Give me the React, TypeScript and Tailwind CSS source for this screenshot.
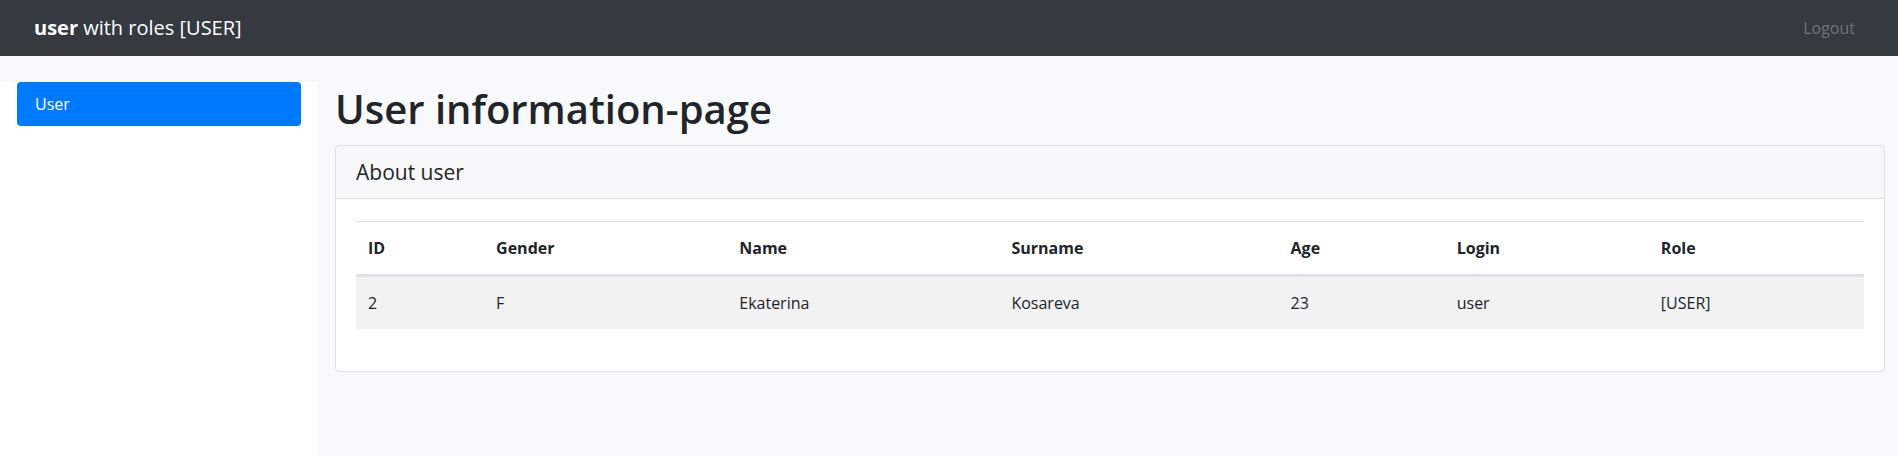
import React from "react";

const columns = [
  { title: "ID", width: "w-[128px]" },
  { title: "Gender", width: "w-[243px]" },
  { title: "Name", width: "w-[272px]" },
  { title: "Surname", width: "w-[279px]" },
  { title: "Age", width: "w-[166px]" },
  { title: "Login", width: "w-[204px]" },
  { title: "Role", width: "w-[215px]" },
];

const user = ["2", "F", "Ekaterina", "Kosareva", "23", "user", "[USER]"];

const App = () => {
  return (
    <div className="min-h-screen bg-[#f8f9fa] font-['Segoe_UI','Open_Sans',sans-serif] text-[#212529]">
      <nav className="flex h-[56px] items-center justify-between bg-[#343a40] pl-[34px] pr-[43px]">
        <span className="text-[20px] text-white">
          <b className="font-bold">user</b> with roles [USER]
        </span>
        <a href="#" className="text-[16px] text-[#6c757d]">
          Logout
        </a>
      </nav>

      <div className="mt-[26px] flex min-h-[374px]">
        <aside className="w-[317px] shrink-0 bg-white pl-[17px] pr-[16px]">
          <a
            href="#"
            className="flex h-[44px] items-center rounded-[4px] bg-[#007bff] pl-[18px] text-[16px] text-white"
          >
            User
          </a>
        </aside>

        <main className="flex-1 pl-[18px] pr-[13px] pt-[3px]">
          <h1 className="mb-[12px] h-[48px] text-[40px] font-semibold leading-[48px]">
            User information-page
          </h1>

          <section className="rounded-[4px] border border-[#dfdfdf] bg-white">
            <div className="flex h-[53px] items-center rounded-t-[4px] border-b border-[#dfdfdf] bg-[#f7f8f9] px-[20px]">
              <h5 className="text-[21px] leading-[24px]">About user</h5>
            </div>
            <div className="px-[20px] pt-[22px] pb-[42px]">
              <table className="w-full table-fixed border-separate border-spacing-0 text-left text-[16px]">
                <thead>
                  <tr>
                    {columns.map((col) => (
                      <th
                        key={col.title}
                        className={`${col.width} border-t border-b-[3px] border-[#dee2e6] px-[12px] pt-[14px] pb-[14px] align-middle font-bold leading-[24px]`}
                      >
                        {col.title}
                      </th>
                    ))}
                  </tr>
                </thead>
                <tbody>
                  <tr className="bg-[#f2f2f2]">
                    {user.map((value, index) => (
                      <td key={index} className="px-[12px] py-[14px] align-middle leading-[24px]">
                        {value}
                      </td>
                    ))}
                  </tr>
                </tbody>
              </table>
            </div>
          </section>
        </main>
      </div>
    </div>
  );
};

export default App;
